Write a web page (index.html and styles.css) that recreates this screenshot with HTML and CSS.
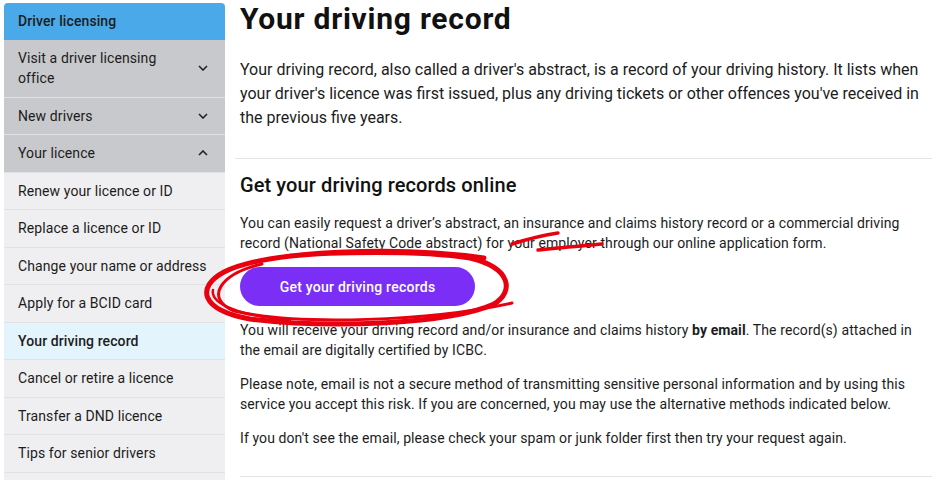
FILE: index.html
```html
<!DOCTYPE html>
<html lang="en">
<head>
<meta charset="utf-8">
<title>Your driving record</title>
<link rel="stylesheet" href="styles.css">
</head>
<body>
<div class="page">
  <nav class="sidebar">
    <div class="side-head">Driver licensing</div>
    <div class="side-item group"><span>Visit a driver licensing office</span><svg class="chev" viewBox="0 0 10 6"><path d="M1 1l4 4 4-4"/></svg></div>
    <div class="side-item group"><span>New drivers</span><svg class="chev" viewBox="0 0 10 6"><path d="M1 1l4 4 4-4"/></svg></div>
    <div class="side-item group"><span>Your licence</span><svg class="chev" viewBox="0 0 10 6"><path d="M1 5l4-4 4 4"/></svg></div>
    <div class="side-item sub">Renew your licence or ID</div>
    <div class="side-item sub">Replace a licence or ID</div>
    <div class="side-item sub">Change your name or address</div>
    <div class="side-item sub">Apply for a BCID card</div>
    <div class="side-item sub active">Your driving record</div>
    <div class="side-item sub">Cancel or retire a licence</div>
    <div class="side-item sub">Transfer a DND licence</div>
    <div class="side-item sub">Tips for senior drivers</div>
    <div class="side-item sub empty"></div>
  </nav>
  <main class="main">
    <h1 class="title">Your driving record</h1>
    <p class="lead">Your driving record, also called a driver's abstract, is a record of your driving history. It lists when your driver's licence was first issued, plus any driving tickets or other offences you've received in the previous five years.</p>
    <hr class="rule first">
    <h2 class="subtitle">Get your driving records online</h2>
    <p class="body">You can easily request a driver’s abstract, an insurance and claims history record or a commercial driving record (National Safety Code abstract) for your employer through our online application form.</p>
    <div class="btn-row"><a class="btn" href="#">Get your driving records</a></div>
    <p class="body">You will receive your driving record and/or insurance and claims history <b>by email</b>. The record(s) attached in the email are digitally certified by ICBC.</p>
    <p class="body">Please note, email is not a secure method of transmitting sensitive personal information and by using this service you accept this risk. If you are concerned, you may use the alternative methods indicated below.</p>
    <p class="body">If you don't see the email, please check your spam or junk folder first then try your request again.</p>
    <hr class="rule last">
  </main>
</div>
<svg class="markup" viewBox="0 0 936 480" width="936" height="480">
  <g fill="none" stroke="#e8000f" stroke-linecap="round" stroke-linejoin="round">
    <path stroke-width="5" d="M484 258 C400 246 268 250 224 272 C196 287 200 310 250 319 C330 329 450 324 494 304 C514 292 512 268 470 258 C420 250 330 252 290 256"/>
    <path stroke-width="3" d="M262 264 C220 274 204 298 234 311 C300 326 430 321 512 303"/>
    <path stroke-width="2.5" d="M213 290 C210 304 240 316 290 320"/>
    <path stroke-width="3.5" d="M512 244 C528 239 544 235 558 233"/>
    <path stroke-width="3.5" d="M538 250 C555 248 580 246 602 244"/>
  </g>
</svg>
</body>
</html>
```
FILE: styles.css
```css
* { box-sizing: border-box; }
html, body { margin: 0; padding: 0; background: #fff; }
body {
  font-family: Roboto, "Liberation Sans", sans-serif;
  color: #1c1c1c;
  width: 936px;
  height: 480px;
  overflow: hidden;
  position: relative;
}
.page {
  display: flex;
  align-items: flex-start;
  padding: 3px 4px 0 4px;
}
.sidebar {
  width: 221px;
  flex: none;
  border-radius: 4px 4px 0 0;
  overflow: hidden;
  font-size: 14px;
  line-height: 20px;
  letter-spacing: 0.1px;
}
.side-head {
  background: #4aa9e8;
  font-weight: 500;
  padding: 8px 14px 9px;
  height: 37px;
}
.side-item {
  display: flex;
  align-items: center;
  justify-content: space-between;
  padding: 8px 14px 8.5px;
  border-bottom: 1px solid #e2e2e4;
}
.side-item.empty { height: 37.5px; }
.side-item.group { background: #c8c9cc; }
.side-item.group span { max-width: 160px; }
.side-item.sub { background: #efeff1; }
.side-item.active { background: #e3f4fc; font-weight: 500; }
.chev {
  width: 10px;
  height: 6px;
  fill: none;
  stroke: #222;
  stroke-width: 1.6;
  margin-right: 3px;
}
.main {
  flex: 1;
  margin-left: 10px;
  padding-left: 5px;
  min-width: 0;
}
.title {
  margin: -2px 0 0;
  font-size: 30px;
  line-height: 36px;
  font-weight: 700;
  letter-spacing: 0.75px;
  color: #111;
}
.lead {
  margin: 21px 0 0;
  font-size: 16px;
  line-height: 24px;
}
.rule {
  border: 0;
  border-top: 1px solid #e4e4e4;
  margin: 28px 0 0 -5px;
}
.rule.last { margin-left: 0; }
.subtitle {
  margin: 13px 0 0;
  font-size: 20px;
  line-height: 26px;
  font-weight: 500;
  letter-spacing: 0.1px;
  color: #111;
}
.body {
  margin: 14px 0 0;
  font-size: 14px;
  line-height: 20px;
  letter-spacing: 0.1px;
}
.subtitle + .body { margin-top: 15px; }
.body b { font-weight: 700; }
.btn-row { margin-top: 14px; margin-bottom: 1px; }
.btn {
  display: inline-flex;
  align-items: center;
  justify-content: center;
  width: 235px;
  height: 39px;
  border-radius: 20px;
  background: #7b2ff6;
  color: #fff;
  font-size: 14px;
  font-weight: 500;
  letter-spacing: 0.25px;
  text-decoration: none;
}
.markup {
  position: absolute;
  left: 0;
  top: 0;
  pointer-events: none;
}
```
